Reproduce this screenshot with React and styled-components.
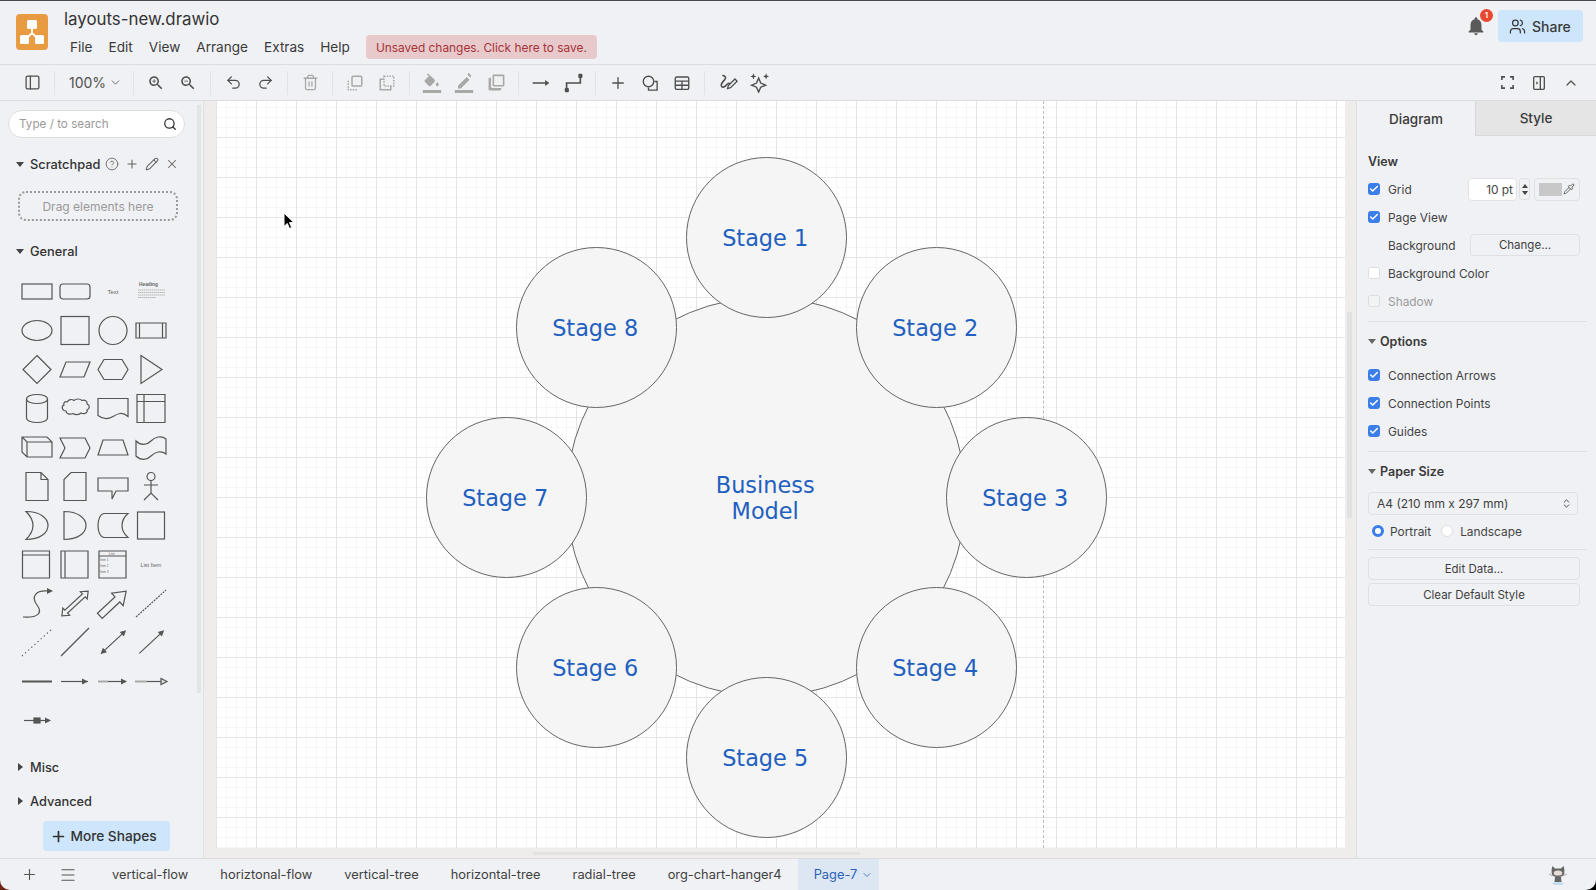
import React from 'react'
import styled, { createGlobalStyle } from 'styled-components'
import {
    Check, ChevronDown, ChevronUp, ChevronsUpDown, CircleHelp, Menu, PanelLeft, Pencil,
    Pipette, Plus, Redo2, Search, Trash2, Undo2, Users, X,
} from 'lucide-react'

const GlobalStyle = createGlobalStyle`
    html, body {
        margin: 0;
        padding: 0;
        width: 100%;
        height: 100%;
        overflow: hidden;
        background: linear-gradient(90deg, #6e2412 0%, #3a1208 30%, #000 60%);
    }
    * {
        box-sizing: border-box;
    }
`

const Frame = styled.div`
    display: flex;
    flex-direction: column;
    width: 1596px;
    height: 890px;
    background: #f0f1f4;
    border-top: 1px solid #4a4a4a;
    border-radius: 0 0 10px 10px;
    overflow: hidden;
    color: #3a3a3a;
    font-family: Inter, 'Noto Sans', sans-serif;
`

/* header */

const Header = styled.header`
    display: flex;
    align-items: flex-start;
    height: 64px;
    flex: none;
    border-bottom: 1px solid #dcdcdc;
    padding-left: 16px;
`

const Logo = styled.svg`
    width: 32px;
    height: 36px;
    margin-top: 13px;
    flex: none;
`

const TitleBlock = styled.div`
    display: flex;
    flex-direction: column;
    margin-left: 16px;
`

const FileName = styled.div`
    font-size: 16.85px;
    line-height: 24px;
    margin-top: 6px;
    color: #333;
`

const MenuBar = styled.nav`
    display: flex;
    align-items: center;
    margin-top: 4px;
    margin-left: -2px;
`

const MenuItem = styled.span`
    padding: 0 8px;
    font-size: 13.6px;
    line-height: 24px;
    color: #3a3a3a;
`

const SaveNotice = styled.div`
    margin-left: 8px;
    height: 24px;
    padding: 0 10px;
    display: flex;
    align-items: center;
    border-radius: 4px;
    background: #e9cacc;
    color: #a53338;
    font-size: 11.9px;
`

const HeaderRight = styled.div`
    margin-left: auto;
    margin-right: 13px;
    margin-top: 9px;
    display: flex;
    align-items: center;
`

const BellWrap = styled.div`
    position: relative;
    width: 22px;
    height: 22px;
    margin-right: 11px;
    color: #5a5a5a;
`

const Badge = styled.span`
    position: absolute;
    top: -6px;
    right: -6px;
    width: 13px;
    height: 13px;
    border-radius: 50%;
    background: #e8482e;
    color: #fff;
    font-size: 8px;
    line-height: 13px;
    font-weight: 600;
    text-align: center;
`

const ShareButton = styled.button`
    display: flex;
    align-items: center;
    gap: 6px;
    width: 85px;
    height: 32px;
    padding: 0 0 0 11px;
    border: none;
    border-radius: 4px;
    background: #cde6fb;
    color: #3a3a3a;
    font: 500 14px Inter, sans-serif;
`

/* toolbar */

const Toolbar = styled.div`
    display: flex;
    align-items: center;
    height: 36px;
    flex: none;
    padding: 0 9px 0 16px;
    border-bottom: 1px solid #dcdcdc;
`

const ToolButton = styled.div`
    width: 32px;
    height: 32px;
    flex: none;
    display: flex;
    align-items: center;
    justify-content: center;
    color: ${p => (p.$off ? '#a8a8a8' : '#4f4f4f')};
`

const ToolSep = styled.div`
    width: 1px;
    height: 24px;
    flex: none;
    margin: 0 6px;
    background: #e2e3e6;
`

const ZoomPick = styled.div`
    width: 66px;
    flex: none;
    display: flex;
    align-items: center;
    gap: 3px;
    padding-left: 8px;
    font-size: 14px;
    color: #4f4f4f;
`

const ToolSpacer = styled.div`
    flex: 1;
`

/* main */

const Main = styled.div`
    flex: 1;
    min-height: 0;
    display: flex;
`

const Sidebar = styled.aside`
    position: relative;
    width: 204px;
    flex: none;
    padding-top: 9px;
    border-right: 1px solid #e0e0e0;
`

const SideScroll = styled.div`
    position: absolute;
    left: 197px;
    top: 4px;
    width: 4px;
    height: 588px;
    background: #e3e4e6;
`

const SearchBox = styled.div`
    display: flex;
    align-items: center;
    justify-content: space-between;
    width: 177px;
    height: 28px;
    margin-left: 8px;
    padding: 0 7px 0 10px;
    border: 1px solid #dedede;
    border-radius: 14px;
    background: #fff;
    color: #333;
    span {
        color: #9a9a9a;
        font-size: 11.7px;
    }
`

const SectionHead = styled.div`
    display: flex;
    align-items: center;
    height: 24px;
    margin-top: ${p => p.$top}px;
    padding-left: 16px;
    font-size: 12.8px;
    font-weight: 500;
    color: #333;
`

const Caret = styled.span`
    width: 0;
    height: 0;
    flex: none;
    margin-right: ${p => (p.$open ? 6 : 7)}px;
    margin-left: ${p => (p.$open ? 0 : 2)}px;
    ${p => (p.$open
        ? 'border-left: 4px solid transparent; border-right: 4px solid transparent; border-top: 5px solid #444;'
        : 'border-top: 4px solid transparent; border-bottom: 4px solid transparent; border-left: 5px solid #444;')}
`

const HeadTools = styled.div`
    display: flex;
    align-items: center;
    color: #666;
    margin-left: 5px;
    gap: 6px;
`

const DropZone = styled.div`
    width: 160px;
    height: 30px;
    margin: 15px 0 0 18px;
    display: flex;
    align-items: center;
    justify-content: center;
    border: 2px dotted #9a9a9a;
    border-radius: 8px;
    color: #9a9a9a;
    font-size: 12px;
`

const ShapeGrid = styled.div`
    display: grid;
    grid-template-columns: repeat(4, 38px);
    grid-auto-rows: 39px;
    margin: 9px 0 0 17.5px;
`

const ShapeIcon = styled.svg`
    width: 38px;
    height: 39px;
    fill: none;
    stroke: #555;
    stroke-width: 1.2;
    text {
        font-family: 'Liberation Sans', sans-serif;
        stroke: none;
        fill: #666;
    }
`

const MoreShapes = styled.button`
    display: flex;
    align-items: center;
    justify-content: center;
    gap: 3px;
    width: 127px;
    height: 30px;
    margin: 8px 0 0 43px;
    padding: 0 6px 0 0;
    border: none;
    border-radius: 4px;
    background: #cde6fb;
    color: #333;
    font: 500 13.7px Inter, sans-serif;
`

/* canvas */

const CanvasArea = styled.section`
    position: relative;
    flex: 1;
    min-width: 0;
    display: flex;
    padding: 0 11px 10px 12px;
    background: #efedeb;
`

const Page = styled.div`
    position: relative;
    flex: 1;
    overflow: hidden;
    background-color: #fff;
    background-image:
        linear-gradient(#e4e4e9 1px, transparent 1px),
        linear-gradient(90deg, #e4e4e9 1px, transparent 1px),
        linear-gradient(#f6f6f8 1px, transparent 1px),
        linear-gradient(90deg, #f6f6f8 1px, transparent 1px);
    background-size: 40px 40px, 40px 40px, 10px 10px, 10px 10px;
    background-position: 0 36px, 0 0, 0 6px, 0 0;
`

const PageBreak = styled.div`
    position: absolute;
    left: 827px;
    top: 0;
    bottom: 0;
    border-left: 1px dashed #bbb;
`

const Node = styled.div`
    position: absolute;
    left: ${p => p.$cx - p.$size / 2 - 216}px;
    top: ${p => p.$cy - p.$size / 2 - 101}px;
    width: ${p => p.$size}px;
    height: ${p => p.$size}px;
    padding: 2px 2px 0 0;
    display: flex;
    align-items: center;
    justify-content: center;
    text-align: center;
    border: 1px solid #666;
    border-radius: 50%;
    background: #f5f5f5;
    color: #1f60c0;
    font-family: 'DejaVu Sans', Verdana, sans-serif;
    font-size: 22.4px;
    line-height: 26px;
`

const Pointer = styled.svg`
    position: absolute;
    left: 67px;
    top: 111px;
    width: 12px;
    height: 18px;
`

const ScrollBar = styled.div`
    position: absolute;
    left: ${p => p.$x}px;
    top: ${p => p.$y}px;
    width: ${p => p.$w}px;
    height: ${p => p.$h}px;
    background: #e2e2e2;
`

/* format panel */

const FormatPanel = styled.aside`
    width: 240px;
    flex: none;
    border-left: 1px solid #dedede;
    color: #444;
    font-size: 11.9px;
`

const TabRow = styled.div`
    display: flex;
    height: 35px;
`

const PanelTab = styled.div`
    flex: ${p => (p.$active ? '0 0 118px' : '1')};
    display: flex;
    align-items: center;
    justify-content: center;
    font-size: 13.5px;
    font-weight: 500;
    color: #3a3a3a;
    background: ${p => (p.$active ? 'transparent' : '#e5e5e5')};
    border-left: ${p => (p.$active ? 'none' : '1px solid #d8d8d8')};
    border-bottom: ${p => (p.$active ? 'none' : '1px solid #d8d8d8')};
`

const PanelBody = styled.div`
    padding: 14px 9px 0 11px;
`

const PanelTitle = styled.div`
    display: flex;
    align-items: center;
    height: 24px;
    padding-bottom: 2px;
    font-size: 12.5px;
    font-weight: 600;
    color: #3a3a3a;
    &::before {
        content: ${p => (p.$fold ? "''" : 'none')};
        width: 0;
        height: 0;
        margin-right: 4px;
        border-left: 4px solid transparent;
        border-right: 4px solid transparent;
        border-top: 5px solid #666;
    }
`

const OptionRow = styled.div`
    display: flex;
    align-items: center;
    height: 28px;
    padding-right: 7px;
    color: ${p => (p.$off ? '#9c9c9c' : '#444')};
`

const Tick = styled.span`
    width: 12px;
    height: 12px;
    flex: none;
    margin-right: 8px;
    display: flex;
    align-items: center;
    justify-content: center;
    border-radius: 2.5px;
    color: #fff;
    background: ${p => (p.$on ? '#3b7ee9' : p.$off ? '#f2f3f5' : '#fff')};
    border: 1px solid ${p => (p.$on ? '#3b7ee9' : '#dddddd')};
`

const Indent = styled.span`
    padding-left: 20px;
`

const Divider = styled.hr`
    height: 1px;
    margin: ${p => p.$top}px 0 8px;
    border: none;
    background: #e0e1e4;
`

const PanelGap = styled.div`
    height: ${p => p.$h}px;
`

const GridControls = styled.div`
    margin-left: auto;
    display: flex;
    align-items: center;
`

const PtInput = styled.div`
    width: 49px;
    height: 23px;
    padding-right: 3px;
    display: flex;
    align-items: center;
    justify-content: flex-end;
    background: #fff;
    border: 1px solid #e2e2e4;
    border-radius: 4px;
    color: #444;
`

const Spinner = styled.div`
    width: 11px;
    height: 22px;
    margin: 0 4px 0 2px;
    display: flex;
    flex-direction: column;
    align-items: center;
    justify-content: space-around;
    border: 1px solid #e0e0e2;
    border-radius: 3px;
    padding: 3px 0;
    i {
        width: 0;
        height: 0;
        border-left: 3px solid transparent;
        border-right: 3px solid transparent;
    }
    i:first-child {
        border-bottom: 4px solid #444;
    }
    i:last-child {
        border-top: 4px solid #444;
    }
`

const ColorPick = styled.div`
    width: 46px;
    height: 23px;
    padding: 0 4px;
    display: flex;
    align-items: center;
    justify-content: space-between;
    border: 1px solid #e0e0e2;
    border-radius: 4px;
    color: #444;
    b {
        width: 23px;
        height: 13px;
        background: #c8c8c8;
    }
`

const PanelButton = styled.div`
    width: ${p => p.$w || 212}px;
    height: ${p => p.$h || 23}px;
    margin-top: ${p => p.$top || 0}px;
    margin-left: ${p => (p.$right ? 'auto' : 0)};
    display: flex;
    align-items: center;
    justify-content: center;
    border: 1px solid #dfe0e3;
    border-radius: 4px;
    color: #3f3f3f;
    font-size: 11.5px;
`

const PaperSelect = styled(PanelButton)`
    justify-content: space-between;
    margin-top: 8px;
    padding: 0 5px 0 8px;
    width: 210px;
    font-size: 12px;
`

const RadioRow = styled.div`
    display: flex;
    align-items: center;
    height: 20px;
    margin-top: 6px;
    padding-left: 4px;
`

const Radio = styled.span`
    width: 12px;
    height: 12px;
    border-radius: 50%;
    margin: ${p => (p.$on ? '0 6px 0 0' : '0 7px 0 10px')};
    background: #fff;
    border: ${p => (p.$on ? '3.5px solid #3b7ee9' : '1px solid #ddd')};
`

/* tabs */

const TabBar = styled.footer`
    display: flex;
    align-items: stretch;
    height: 32px;
    flex: none;
    border-top: 1px solid #dcdcdc;
    padding-left: 21px;
`

const TabTool = styled.div`
    width: ${p => p.$w}px;
    flex: none;
    display: flex;
    align-items: center;
    color: #555;
`

const SheetTab = styled.div`
    display: flex;
    align-items: center;
    gap: 4px;
    padding: ${p => (p.$active ? '0 6px 0 16px' : '0 16px')};
    font-size: 12.85px;
    color: ${p => (p.$active ? '#2b62b5' : '#3f3f3f')};
    background: ${p => (p.$active ? '#dde7f4' : 'transparent')};
`

const Mascot = styled.svg`
    margin: 5px 29px 0 auto;
    width: 18px;
    height: 22px;
`

const matBase = 'M15.5 14h-.79l-.28-.27C15.41 12.59 16 11.11 16 9.5 16 5.91 13.09 3 9.5 3S3 5.91 3 9.5 5.91 16 9.5 16c1.61 0 3.09-.59 4.23-1.57l.27.28v.79l5 4.99L20.49 19l-4.99-5zm-6 0C7.01 14 5 11.99 5 9.5S7.01 5 9.5 5 14 7.01 14 9.5 11.99 14 9.5 14z'

const Icon = ({ children, size = 18, fill = 'currentColor' }) => (
    <svg width={size} height={size} viewBox="0 0 24 24" fill={fill}>{children}</svg>
)

const line = { fill: 'none', stroke: 'currentColor', strokeWidth: 2 }
const thin = { fill: 'none', stroke: 'currentColor', strokeWidth: 1.8 }
const dots = { fill: 'none', stroke: 'currentColor', strokeWidth: 2, strokeDasharray: '2 1.6' }

const ToFront = () => (
    <Icon size={18}>
        <path d="M3 9v12h12" {...dots} />
        <rect x="8" y="3" width="13" height="13" rx="1.5" {...line} />
    </Icon>
)

const ToBack = () => (
    <Icon size={18}>
        <path d="M8 7H3v14h14v-5" {...line} />
        <rect x="8" y="3" width="13" height="13" {...dots} />
    </Icon>
)

const FillColor = () => (
    <Icon size={22}>
        <path d="M14.8 8.3L7.6 1.6 6.5 2.7l2 2-4.4 4.3c-.5.5-.5 1.2 0 1.7l4.6 4.5c.5.5 1.2.5 1.7 0l4.4-4.4c.5-.4.5-1.1 0-1.5zM17.8 11s-1.7 1.9-1.7 3c0 .9.8 1.6 1.7 1.6s1.6-.7 1.6-1.6c0-1.1-1.6-3-1.6-3z" />
        <path d="M2 19.5h20V23H2z" />
    </Icon>
)

const LineColor = () => (
    <Icon size={22}>
        <path d="M15 5.5l-9.5 9.5V18h3l9.5-9.5zM19.5 4.6c.4-.4.4-.9 0-1.3l-1.8-1.8c-.4-.4-.9-.4-1.3 0L15.8 3 19 6.2z" />
        <path d="M2 19.5h20V23H2z" />
    </Icon>
)

const ShadowIcon = () => (
    <Icon size={19}>
        <path d="M5 6H3.5C2.7 6 2 6.7 2 7.5v13c0 .8.7 1.5 1.5 1.5h13c.8 0 1.5-.7 1.5-1.5V19H7c-1.1 0-2-.9-2-2z" />
        <path d="M8.5 2h12c.8 0 1.5.7 1.5 1.5v12c0 .8-.7 1.5-1.5 1.5h-12C7.7 17 7 16.3 7 15.5v-12C7 2.7 7.7 2 8.5 2zM9 4v11h11V4z" />
    </Icon>
)

const Connector = () => (
    <Icon size={20}>
        <path d="M2 12h16" {...line} />
        <path d="M17 8.5l5 3.5-5 3.5z" />
    </Icon>
)

const Waypoints = () => (
    <Icon size={22}>
        <path d="M5 20v-8h15V5" {...thin} />
        <rect x="3" y="17.5" width="4.5" height="4.5" rx="1" />
        <rect x="17.8" y="2" width="4.5" height="4.5" rx="1" />
    </Icon>
)

const ShapeTool = () => (
    <Icon size={18}>
        <circle cx="10" cy="10" r="7" {...thin} />
        <path d="M18 10h3.5v11.5H10V18" {...thin} />
    </Icon>
)

const TableTool = () => (
    <Icon size={18}>
        <rect x="3" y="4" width="18" height="16.5" rx="2" {...thin} />
        <path d="M3 9.5h18M3 15h18M12 9.5v11" {...thin} />
    </Icon>
)

const Freehand = () => (
    <Icon size={21}>
        <path d="M6 4c3 0 5 2 3 4.5S4 13 5 16c1 2.5 4 1 6-1.5s4-2 3 0" {...thin} />
        <path d="M12 19l1-3.5L20.5 8l2.500 2.500-7.500 7.500z" fill="none" stroke="currentColor" strokeWidth="1.5" />
    </Icon>
)

const Sparkle = () => (
    <Icon size={21}>
        <path d="M11 7l2.400 5.600L19 15l-5.600 2.400L11 23l-2.400-5.600L3 15l5.600-2.400z" fill="none" stroke="currentColor" strokeWidth="1.6" />
        <path d="M5 1.5l1 2.5 2.500 1-2.500 1-1 2.500-1-2.500L1.500 5 4 4zM19.5 1.5l1 2.5 2.500 1-2.500 1-1 2.500-1-2.500L16 5l2.500-1z" />
    </Icon>
)

const FullScreen = () => (
    <Icon size={15}>
        <path d="M3 8V3h5M16 3h5v5M21 16v5h-5M8 21H3v-5" fill="none" stroke="currentColor" strokeWidth="2.6" />
    </Icon>
)

const PanelToggle = () => (
    <Icon size={16}>
        <rect x="4" y="2.5" width="16" height="19" rx="1.5" {...line} />
        <path d="M14 2.5v19" {...line} />
        <path d="M8 9.5l3 2.5-3 2.500z" />
    </Icon>
)

const ArrowHead = ({ x, y = 19.5 }) => <path d={`M${x} ${y}l-6-3v6z`} fill="#555" stroke="none" />

const shapeRows = [
    <rect x="4" y="12" width="30" height="15" />,
    <rect x="4" y="12" width="30" height="15" rx="3" />,
    <text x="19" y="21.5" fontSize="6" textAnchor="middle">Text</text>,
    <>
        <text x="7" y="14" fontSize="4.8" fontWeight="700">Heading</text>
        <path d="M6 18h27M6 20.500h27M6 23h27M6 25.500h18" stroke="#b5b5b5" strokeWidth="1" strokeDasharray="1.5 .5" />
    </>,
    <ellipse cx="19" cy="19.5" rx="15" ry="10" />,
    <rect x="5" y="5.5" width="28" height="28" />,
    <circle cx="19" cy="19.5" r="14" />,
    <path d="M4 12h30v15H4zM7.500 12v15M30.500 12v15" />,
    <path d="M19 5.500l14 14-14 14-14-14z" />,
    <path d="M4 27l6-15h24l-6 15z" />,
    <path d="M4 19.500l6-10h18l6 10-6 10H10z" />,
    <path d="M9 5.500l21 14-21 14z" />,
    <path d="M8.500 10a10.500 4.500 0 0 1 21 0v19a10.500 4.500 0 0 1-21 0zM8.500 10a10.500 4.500 0 0 0 21 0" />,
    <path d="M11 13c2-3 5-3 7-1.500 2-2 6-2 8 0 3-1 6 1 5 3.500 3 1 3 5 0 6 1 3-3 4.500-6 3-2 2-6 2-8 .5-3 1.500-7 .5-7-2.500-4 0-5-5-2-6-1-2 1-4 3-3z" />,
    <path d="M4 9.500h30v18c-6-5-10-3-15 0s-10 3-15-1z" />,
    <path d="M5 5.500h28v28H5zM12 5.500v28M5 12.500h28" />,
    <path d="M4 9h25l5 5v15H9l-5-5zM4 9l5 5h25M9 14v15" />,
    <path d="M4 10h25l5 10-5 10H4l5-10z" />,
    <path d="M4 27l5-15h20l5 15z" />,
    <path d="M4 13c5 5 11 4 15 0s10-6 15-2v15c-5-4-11-2-15 2s-10 5-15 0z" />,
    <path d="M8 5.500h15l7 7v21H8zM23 5.500v7h7" />,
    <path d="M15 5.500h15v28H8v-21z" />,
    <path d="M4 11h30v13H22l-4 8v-8H4z" />,
    <>
        <circle cx="19" cy="9.5" r="4" />
        <path d="M19 13.500V26M12 18h14M12 33l7-7 7 7" />
    </>,
    <path d="M8 5.500c14 0 22 6.500 22 14s-8 14-22 14c5-5 7-9.500 7-14s-2-9-7-14z" />,
    <path d="M8 5.500c14 0 22 6.500 22 14s-8 14-22 14z" />,
    <path d="M10 7.500h24c-5 4.500-6 8.500-6 12s1 7.500 6 12H10c-4-.5-6-6.500-6-12s2-11.500 6-12z" />,
    <rect x="5.5" y="6" width="27" height="27" />,
    <path d="M4.500 6h27v27h-27zM4.500 10h27" />,
    <path d="M5 6h27v27H5zM9 6v27" />,
    <>
        <path d="M5 6h27v27H5zM5 11h27" />
        <text x="15" y="10" fontSize="3.5">List</text>
        <text x="6" y="16" fontSize="3">Item 1</text>
        <text x="6" y="22" fontSize="3">Item 2</text>
        <text x="6" y="28" fontSize="3">Item 3</text>
    </>,
    <text x="19" y="21.5" fontSize="5.5" textAnchor="middle">List Item</text>,
    <>
        <path d="M5 33c15 1 20-4 14-12-6-8-2-15 11-14" />
        <path d="M35 7l-6-3v6z" fill="#555" stroke="none" />
    </>,
    <path d="M1 19.500l6-5v3h24v-3l6 5-6 5v-3H7v3z" transform="rotate(-43 19 19.5)" />,
    <path d="M1 16h24v-5l12 8.500L25 28v-5H1z" transform="rotate(-43 19 19.5)" />,
    <path d="M4 33L34 6" strokeDasharray="2 1" />,
    <path d="M4 33L34 6" strokeDasharray="1.2 3" />,
    <path d="M5 33L33 5" />,
    <g transform="rotate(-43 19 19.5)">
        <path d="M3 19.500h32" />
        <ArrowHead x={37} />
        <path d="M2 19.500l6-3v6z" fill="#555" stroke="none" />
    </g>,
    <g transform="rotate(-43 19 19.5)">
        <path d="M3 19.500h32" />
        <ArrowHead x={37} />
    </g>,
    <path d="M4 19.500h30" strokeWidth="2" />,
    <>
        <path d="M5 19.500h27" />
        <ArrowHead x={32} />
    </>,
    <>
        <path d="M4 19.500h10" stroke="#aaa" strokeWidth="2" />
        <path d="M14 19.500h18" />
        <ArrowHead x={33} />
    </>,
    <>
        <path d="M3 19.500h12" stroke="#aaa" strokeWidth="2" />
        <path d="M15 19.500h16" />
        <path d="M35 19.500l-6-3v6z" fill="#ddd" />
    </>,
    <>
        <path d="M6 19.500h26" />
        <rect x="16" y="17" width="6" height="5" fill="#555" />
        <ArrowHead x={33} />
    </>,
]

const menus = ['File', 'Edit', 'View', 'Arrange', 'Extras', 'Help']
const sheets = ['vertical-flow', 'horiztonal-flow', 'vertical-tree', 'horizontal-tree', 'radial-tree', 'org-chart-hanger4']
const stages = [
    ['Stage 1', 766.2, 237.3],
    ['Stage 2', 936.2, 327.3],
    ['Stage 3', 1026.2, 497.3],
    ['Stage 4', 936.2, 667.3],
    ['Stage 5', 766.2, 757.3],
    ['Stage 6', 596.2, 667.3],
    ['Stage 7', 506.2, 497.3],
    ['Stage 8', 596.2, 327.3],
]

const Option = ({ label, on, off }) => (
    <OptionRow $off={off}>
        <Tick $on={on} $off={off}>{on && <Check size={10} strokeWidth={3.5} />}</Tick>
        {label}
    </OptionRow>
)

export default function App() {
    return (
        <Frame>
            <GlobalStyle />
            <Header>
                <Logo viewBox="0 0 32 36">
                    <rect width="32" height="36" rx="4" fill="#e99b41" />
                    <path d="M16 12v7M16 19l-8 8M16 19l8 8" stroke="#fff" strokeWidth="1.8" fill="none" />
                    <rect x="11" y="6" width="10" height="9" rx="1.5" fill="#fff" />
                    <rect x="4" y="21" width="9" height="9" rx="1.5" fill="#fff" />
                    <rect x="19" y="21" width="9" height="9" rx="1.5" fill="#fff" />
                </Logo>
                <TitleBlock>
                    <FileName>layouts-new.drawio</FileName>
                    <MenuBar>
                        {menus.map(m => <MenuItem key={m}>{m}</MenuItem>)}
                        <SaveNotice>Unsaved changes. Click here to save.</SaveNotice>
                    </MenuBar>
                </TitleBlock>
                <HeaderRight>
                    <BellWrap>
                        <Icon size={22}>
                            <path d="M12 22c1.1 0 2-.9 2-2h-4c0 1.1.9 2 2 2zm6-6v-5c0-3.07-1.64-5.64-4.5-6.32V4c0-.83-.67-1.5-1.5-1.5s-1.5.67-1.5 1.5v.68C7.63 5.36 6 7.92 6 11v5l-2 2v1h16v-1l-2-2z" />
                        </Icon>
                        <Badge>1</Badge>
                    </BellWrap>
                    <ShareButton><Users size={17} strokeWidth={1.8} />Share</ShareButton>
                </HeaderRight>
            </Header>

            <Toolbar>
                <ToolButton><PanelLeft size={17} strokeWidth={1.8} /></ToolButton>
                <ToolSep />
                <ZoomPick>100%<ChevronDown size={13} strokeWidth={1.5} /></ZoomPick>
                <ToolSep />
                <ToolButton><Icon><path d={matBase} /><path d="M12 10h-2v2H9v-2H7V9h2V7h1v2h2v1z" /></Icon></ToolButton>
                <ToolButton><Icon><path d={matBase} /><path d="M7 9h5v1H7z" /></Icon></ToolButton>
                <ToolSep />
                <ToolButton><Undo2 size={17} strokeWidth={1.8} /></ToolButton>
                <ToolButton><Redo2 size={17} strokeWidth={1.8} /></ToolButton>
                <ToolSep />
                <ToolButton $off><Trash2 size={17} strokeWidth={1.8} /></ToolButton>
                <ToolSep />
                <ToolButton $off><ToFront /></ToolButton>
                <ToolButton $off><ToBack /></ToolButton>
                <ToolSep />
                <ToolButton $off><FillColor /></ToolButton>
                <ToolButton $off><LineColor /></ToolButton>
                <ToolButton $off><ShadowIcon /></ToolButton>
                <ToolSep />
                <ToolButton><Connector /></ToolButton>
                <ToolButton><Waypoints /></ToolButton>
                <ToolSep />
                <ToolButton><Plus size={18} strokeWidth={1.8} /></ToolButton>
                <ToolButton><ShapeTool /></ToolButton>
                <ToolButton><TableTool /></ToolButton>
                <ToolSep />
                <ToolButton><Freehand /></ToolButton>
                <ToolButton><Sparkle /></ToolButton>
                <ToolSpacer />
                <ToolButton><FullScreen /></ToolButton>
                <ToolButton><PanelToggle /></ToolButton>
                <ToolButton><ChevronUp size={16} strokeWidth={1.8} /></ToolButton>
            </Toolbar>

            <Main>
                <Sidebar>
                    <SideScroll />
                    <SearchBox>
                        <span>Type / to search</span>
                        <Search size={14} strokeWidth={2.2} />
                    </SearchBox>
                    <SectionHead $top={14}>
                        <Caret $open />Scratchpad
                        <HeadTools>
                            <CircleHelp size={14} strokeWidth={1.5} />
                            <Plus size={14} strokeWidth={1.8} />
                            <Pencil size={14} strokeWidth={1.8} />
                            <X size={14} strokeWidth={1.8} />
                        </HeadTools>
                    </SectionHead>
                    <DropZone>Drag elements here</DropZone>
                    <SectionHead $top={18}><Caret $open />General</SectionHead>
                    <ShapeGrid>
                        {shapeRows.map((shape, i) => (
                            <ShapeIcon key={i} viewBox="0 0 38 39">{shape}</ShapeIcon>
                        ))}
                    </ShapeGrid>
                    <SectionHead $top={15}><Caret />Misc</SectionHead>
                    <SectionHead $top={10}><Caret />Advanced</SectionHead>
                    <MoreShapes><Plus size={17} strokeWidth={2.4} />More Shapes</MoreShapes>
                </Sidebar>

                <CanvasArea>
                    <Page>
                        <PageBreak />
                        <Node $cx={766.2} $cy={497.3} $size={400}>Business<br />Model</Node>
                        {stages.map(([label, cx, cy]) => (
                            <Node key={label} $cx={cx} $cy={cy} $size={161}>{label}</Node>
                        ))}
                        <Pointer viewBox="0 0 12 18">
                            <path d="M1 1v13.500l3.300-3 2.200 5 2.200-1-2.200-4.900h4.400z" fill="#000" stroke="#fff" strokeWidth="1" />
                        </Pointer>
                    </Page>
                    <ScrollBar $x={1143} $y={211} $w={5} $h={206} />
                    <ScrollBar $x={329} $y={751} $w={327} $h={3} />
                </CanvasArea>

                <FormatPanel>
                    <TabRow>
                        <PanelTab $active>Diagram</PanelTab>
                        <PanelTab>Style</PanelTab>
                    </TabRow>
                    <PanelBody>
                        <PanelTitle>View</PanelTitle>
                        <PanelGap $h={1} />
                        <OptionRow>
                            <Tick $on><Check size={10} strokeWidth={3.5} /></Tick>
                            Grid
                            <GridControls>
                                <PtInput>10 pt</PtInput>
                                <Spinner><i /><i /></Spinner>
                                <ColorPick><b /><Pipette size={12} strokeWidth={1.6} /></ColorPick>
                            </GridControls>
                        </OptionRow>
                        <Option label="Page View" on />
                        <OptionRow>
                            <Indent>Background</Indent>
                            <PanelButton $w={110} $h={22} $right>Change...</PanelButton>
                        </OptionRow>
                        <Option label="Background Color" />
                        <Option label="Shadow" off />
                        <Divider $top={6} />
                        <PanelTitle $fold>Options</PanelTitle>
                        <PanelGap $h={7} />
                        <Option label="Connection Arrows" on />
                        <Option label="Connection Points" on />
                        <Option label="Guides" on />
                        <Divider $top={6} />
                        <PanelTitle $fold>Paper Size</PanelTitle>
                        <PaperSelect $w={210}>
                            A4 (210 mm x 297 mm)
                            <ChevronsUpDown size={11} strokeWidth={2} />
                        </PaperSelect>
                        <RadioRow>
                            <Radio $on />Portrait
                            <Radio />Landscape
                        </RadioRow>
                        <Divider $top={8} />
                        <PanelButton $top={-1}>Edit Data...</PanelButton>
                        <PanelButton $top={3}>Clear Default Style</PanelButton>
                    </PanelBody>
                </FormatPanel>
            </Main>

            <TabBar>
                <TabTool $w={38}><Plus size={17} strokeWidth={1.6} /></TabTool>
                <TabTool $w={37}><Menu size={18} strokeWidth={1.6} /></TabTool>
                {sheets.map(s => <SheetTab key={s}>{s}</SheetTab>)}
                <SheetTab $active>Page-7<ChevronDown size={12} strokeWidth={1.6} /></SheetTab>
                <Mascot viewBox="0 0 18 22">
                    <path d="M3.5 2l2.500 2.500h6L14.500 2c.8 2 1 4 .8 6 .5 3-2 5-6.300 5s-6.800-2-6.300-5c-.2-2 0-4 .8-6z" fill="#666" />
                    <ellipse cx="9" cy="9" rx="4.3" ry="2.6" fill="#e8dcd6" />
                    <path d="M6 13h6l.5 5h-7z" fill="#666" />
                    <path d="M0 10l4 2M18 10l-4 2" stroke="#aaa" />
                    <ellipse cx="9" cy="19.5" rx="5.5" ry="1.5" fill="#bfdcf2" />
                </Mascot>
            </TabBar>
        </Frame>
    )
}
